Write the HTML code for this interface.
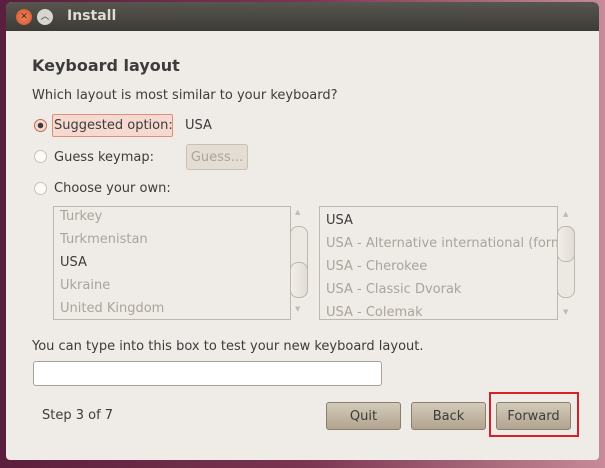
<!DOCTYPE html><html><head><style>
body{margin:0;width:605px;height:468px;overflow:hidden;background:linear-gradient(90deg,#5a1f3c 0%,#7a3550 50%,#c68a98 100%);font-family:"DejaVu Sans","Liberation Sans",sans-serif;font-size:13px;color:#3c3c3c;position:relative}
.win{position:absolute;left:6px;top:2px;width:593px;height:458px;background:#efebe6;border-radius:6px 6px 4px 4px;overflow:hidden}
.tb{height:29px;background:linear-gradient(#58554f,#3c3b37);position:relative}
.a{position:absolute;white-space:nowrap}
.list{position:absolute;background:#efebe6;border:1px solid #bdb7ae;overflow:hidden}
.list div{position:absolute;left:6px;color:#aaa49b;white-space:nowrap}
.sb{position:absolute;width:16px;border:1px solid #bdb7ae;border-radius:8px;background:linear-gradient(90deg,#f2efea,#e1dcd4)}
.btn{position:absolute;top:402px;height:26px;border:1px solid #8a7f6e;border-radius:3px;background:linear-gradient(#d4cbba,#b1a48f);text-align:center;line-height:27px;color:#3c3c3c}
</style></head><body>
<div class="win">
<div class="tb">
<div class="a" style="left:10px;top:7px;width:16px;height:16px;border-radius:50%;background:radial-gradient(#f28a5e,#d2502a);color:#4a2010;font-size:9px;text-align:center;line-height:16px">✕</div>
<div class="a" style="left:31px;top:7px;width:16px;height:16px;border-radius:50%;background:#d8d5cf;color:#3c3b37;font-size:9px;text-align:center;line-height:16px">︿</div>
<div class="a" style="left:61px;top:6px;color:#dfdbd2;font-weight:bold;font-size:14px">Install</div>
</div>
</div>
<div class="a" style="left:32px;top:56px;font-weight:bold;font-size:16px;color:#3c3c3c">Keyboard layout</div>
<div class="a" style="left:32px;top:88px">Which layout is most similar to your keyboard?</div>
<div class="a" style="left:34px;top:119px;width:11px;height:11px;border-radius:50%;border:1px solid #c36850;background:radial-gradient(#3c3c3c 0 2.5px,#f6d9cf 3px)"></div>
<div class="a" style="left:52px;top:114px;width:119px;height:21px;border:1px solid #e0907a;background:#f6d9d1;border-radius:2px"></div>
<div class="a" style="left:54px;top:118px">Suggested option:</div>
<div class="a" style="left:185px;top:118px">USA</div>
<div class="a" style="left:34px;top:150px;width:11px;height:11px;border-radius:50%;border:1px solid #c8c2b8;background:#fbfaf8"></div>
<div class="a" style="left:54px;top:150px">Guess keymap:</div>
<div class="a" style="left:186px;top:144px;width:60px;height:24px;border:1px solid #c8c0b3;border-radius:3px;background:#e3ddd3;color:#aaa49b;text-align:center;line-height:25px">Guess...</div>
<div class="a" style="left:34px;top:182px;width:11px;height:11px;border-radius:50%;border:1px solid #c8c2b8;background:#fbfaf8"></div>
<div class="a" style="left:54px;top:181px">Choose your own:</div>
<div class="list" style="left:53px;top:206px;width:236px;height:112px">
<div style="top:2px">Turkey</div><div style="top:25px">Turkmenistan</div><div style="top:48px;color:#3c3c3c">USA</div><div style="top:71px">Ukraine</div><div style="top:94px">United Kingdom</div></div>
<div class="a" style="left:295px;top:208px;font-size:7px;color:#bbb">▲</div>
<div class="sb" style="left:290px;top:226px;height:70px;background:#ece8e2"></div>
<div class="sb" style="left:290px;top:262px;height:34px"></div>
<div class="a" style="left:295px;top:305px;font-size:7px;color:#bbb">▼</div>
<div class="list" style="left:319px;top:206px;width:237px;height:112px">
<div style="top:6px;color:#3c3c3c">USA</div><div style="top:29px">USA - Alternative international (former</div><div style="top:52px">USA - Cherokee</div><div style="top:75px">USA - Classic Dvorak</div><div style="top:98px">USA - Colemak</div></div>
<div class="a" style="left:563px;top:210px;font-size:7px;color:#bbb">▲</div>
<div class="sb" style="left:557px;top:226px;height:70px;background:#ece8e2"></div>
<div class="sb" style="left:557px;top:226px;height:34px"></div>
<div class="a" style="left:563px;top:308px;font-size:7px;color:#bbb">▼</div>
<div class="a" style="left:32px;top:339px">You can type into this box to test your new keyboard layout.</div>
<div class="a" style="left:33px;top:361px;width:347px;height:23px;border:1px solid #a9a295;border-radius:3px;background:#fff"></div>
<div class="a" style="left:42px;top:408px">Step 3 of 7</div>
<div class="btn" style="left:326px;width:73px">Quit</div>
<div class="btn" style="left:411px;width:73px">Back</div>
<div class="btn" style="left:496px;width:73px">Forward</div>
<div class="a" style="left:489px;top:392px;width:86px;height:41px;border:2px solid #d8202a"></div>
</body></html>
